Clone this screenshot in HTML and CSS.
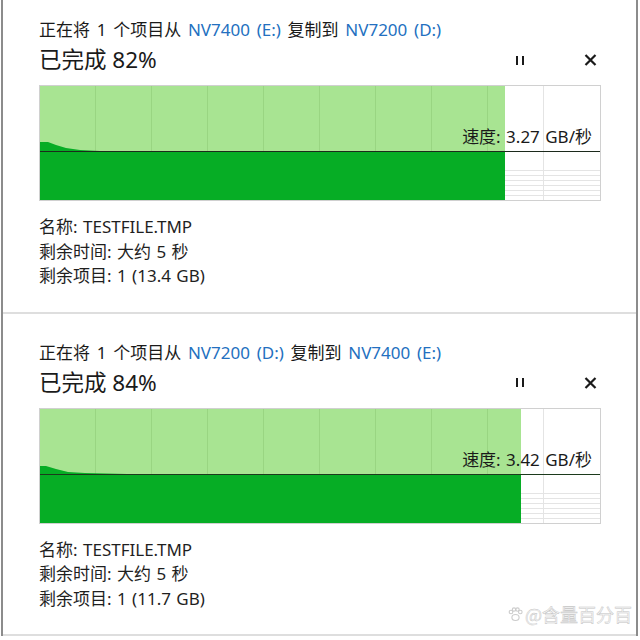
FILE: index.html
```html
<!DOCTYPE html>
<html lang="zh-CN">
<head>
<meta charset="utf-8">
<title>复制进度</title>
<link rel="stylesheet" href="styles.css">
</head>
<body>
<div class="window">
  <section class="panel">
    <div class="title">正在将 1 个项目从 <span class="link">NV7400 (E:)</span> 复制到 <span class="link">NV7200 (D:)</span></div>
    <div class="status-row">
      <div class="percent">已完成 82%</div>
      <div class="controls">
        <span class="ctrl pause"><i></i><i></i></span>
        <span class="ctrl close"><svg width="13" height="12" viewBox="0 0 13 12"><path d="M1.5 1 L11.5 11 M11.5 1 L1.5 11" stroke="#1a1a1a" stroke-width="2.2" fill="none"/></svg></span>
      </div>
    </div>
    <div class="chart">
      <svg class="graph" width="560" height="114" viewBox="0 0 560 114">
        <rect x="0" y="0" width="465" height="114" fill="#a8e492"/>
        <g stroke="#99d582" stroke-width="1" shape-rendering="crispEdges">
          <line x1="55.5" y1="0" x2="55.5" y2="114"/>
          <line x1="111.5" y1="0" x2="111.5" y2="114"/>
          <line x1="167.5" y1="0" x2="167.5" y2="114"/>
          <line x1="223.5" y1="0" x2="223.5" y2="114"/>
          <line x1="279.5" y1="0" x2="279.5" y2="114"/>
          <line x1="335.5" y1="0" x2="335.5" y2="114"/>
          <line x1="391.5" y1="0" x2="391.5" y2="114"/>
          <line x1="447.5" y1="0" x2="447.5" y2="114"/>
        </g>
        <g stroke="#e4e4e4" stroke-width="1" shape-rendering="crispEdges">
          <line x1="503.5" y1="0" x2="503.5" y2="114"/>
          <line x1="465" y1="84.5" x2="560" y2="84.5"/>
          <line x1="465" y1="89.5" x2="560" y2="89.5"/>
          <line x1="465" y1="94.5" x2="560" y2="94.5"/>
          <line x1="465" y1="99.5" x2="560" y2="99.5"/>
          <line x1="465" y1="104.5" x2="560" y2="104.5"/>
          <line x1="465" y1="109.5" x2="560" y2="109.5"/>
        </g>
        <polygon points="0,56 8,56 16,59 26,62 40,64 60,65 465,65 465,114 0,114" fill="#06ad25"/>
        <line x1="0" y1="65.5" x2="560" y2="65.5" stroke="#1c2a1c" stroke-width="1.2"/>
      </svg>
      <div class="speed">速度: 3.27 GB/秒</div>
    </div>
    <div class="info">
      <div>名称: TESTFILE.TMP</div>
      <div>剩余时间: 大约 5 秒</div>
      <div>剩余项目: 1 (13.4 GB)</div>
    </div>
  </section>
  <section class="panel">
    <div class="title">正在将 1 个项目从 <span class="link">NV7200 (D:)</span> 复制到 <span class="link">NV7400 (E:)</span></div>
    <div class="status-row">
      <div class="percent">已完成 84%</div>
      <div class="controls">
        <span class="ctrl pause"><i></i><i></i></span>
        <span class="ctrl close"><svg width="13" height="12" viewBox="0 0 13 12"><path d="M1.5 1 L11.5 11 M11.5 1 L1.5 11" stroke="#1a1a1a" stroke-width="2.2" fill="none"/></svg></span>
      </div>
    </div>
    <div class="chart">
      <svg class="graph" width="560" height="114" viewBox="0 0 560 114">
        <rect x="0" y="0" width="481" height="114" fill="#a8e492"/>
        <g stroke="#99d582" stroke-width="1" shape-rendering="crispEdges">
          <line x1="55.5" y1="0" x2="55.5" y2="114"/>
          <line x1="111.5" y1="0" x2="111.5" y2="114"/>
          <line x1="167.5" y1="0" x2="167.5" y2="114"/>
          <line x1="223.5" y1="0" x2="223.5" y2="114"/>
          <line x1="279.5" y1="0" x2="279.5" y2="114"/>
          <line x1="335.5" y1="0" x2="335.5" y2="114"/>
          <line x1="391.5" y1="0" x2="391.5" y2="114"/>
          <line x1="447.5" y1="0" x2="447.5" y2="114"/>
        </g>
        <g stroke="#e4e4e4" stroke-width="1" shape-rendering="crispEdges">
          <line x1="503.5" y1="0" x2="503.5" y2="114"/>
          <line x1="481" y1="84.5" x2="560" y2="84.5"/>
          <line x1="481" y1="89.5" x2="560" y2="89.5"/>
          <line x1="481" y1="94.5" x2="560" y2="94.5"/>
          <line x1="481" y1="99.5" x2="560" y2="99.5"/>
          <line x1="481" y1="104.5" x2="560" y2="104.5"/>
          <line x1="481" y1="109.5" x2="560" y2="109.5"/>
        </g>
        <polygon points="0,57 6,57 16,60 28,63 45,64 87,65 481,65 481,114 0,114" fill="#06ad25"/>
        <line x1="0" y1="65.5" x2="560" y2="65.5" stroke="#1c3a1c" stroke-width="1.2"/>
      </svg>
      <div class="speed">速度: 3.42 GB/秒</div>
    </div>
    <div class="info">
      <div>名称: TESTFILE.TMP</div>
      <div>剩余时间: 大约 5 秒</div>
      <div>剩余项目: 1 (11.7 GB)</div>
    </div>
  </section>
</div>
<div class="watermark">
  <svg width="15" height="15" viewBox="0 0 15 15"><g fill="none" stroke="#cccccc" stroke-width="1.1"><ellipse cx="7.5" cy="10.5" rx="3.6" ry="3"/><circle cx="3" cy="5" r="1.8"/><circle cx="6" cy="2.6" r="1.7"/><circle cx="9.5" cy="2.6" r="1.7"/><circle cx="12.3" cy="5" r="1.8"/></g></svg>
  <span>@含量百分百</span>
</div>
</body>
</html>
```

FILE: styles.css
```css
html, body {
  margin: 0;
  padding: 0;
  background: #ffffff;
}

body {
  font-family: "Noto Sans", "Noto Sans CJK SC", sans-serif;
  color: #1a1a1a;
  position: relative;
  width: 640px;
  height: 640px;
  overflow: hidden;
}

.window {
  margin-left: 1px;
  width: 633px;
  border-left: 2px solid #8c8c8c;
  border-right: 2px solid #8c8c8c;
  margin-top: -9px;
}

.panel {
  padding: 29px 0 23px 36px;
  border-bottom: 2px solid #dedede;
}

.title {
  font-size: 17px;
  line-height: 20px;
  white-space: nowrap;
  word-spacing: 2.3px;
}

.link {
  color: #2370c0;
}

.status-row {
  width: 562px;
  margin-top: 6px;
  height: 28px;
  display: flex;
  align-items: center;
  justify-content: space-between;
}

.percent {
  font-size: 22.5px;
  line-height: 28px;
}

.controls {
  display: flex;
  align-items: center;
  gap: 48px;
}

.ctrl {
  width: 22px;
  height: 22px;
  display: flex;
  align-items: center;
  justify-content: center;
}

.pause {
  gap: 4px;
}

.pause i {
  display: block;
  width: 2px;
  height: 9px;
  background: #1a1a1a;
}

.chart {
  position: relative;
  width: 560px;
  height: 114px;
  border: 1px solid #d0d0d0;
  margin-top: 11px;
}

.graph {
  display: block;
}

.speed {
  position: absolute;
  right: 8px;
  top: 41px;
  font-size: 17px;
  line-height: 20px;
  color: #1a1a1a;
  white-space: nowrap;
  word-spacing: 1px;
}

.info {
  margin-top: 14px;
  font-size: 17px;
  line-height: 24.5px;
  color: #1f1f1f;
  word-spacing: 1px;
}

.watermark {
  position: absolute;
  left: 508px;
  top: 603px;
  display: flex;
  align-items: center;
  gap: 2px;
  font-family: "Noto Sans CJK SC", sans-serif;
  font-size: 18px;
  line-height: 22px;
  color: #f7f7f7;
  -webkit-text-stroke: 0.45px #c4c4c4;
}
```
